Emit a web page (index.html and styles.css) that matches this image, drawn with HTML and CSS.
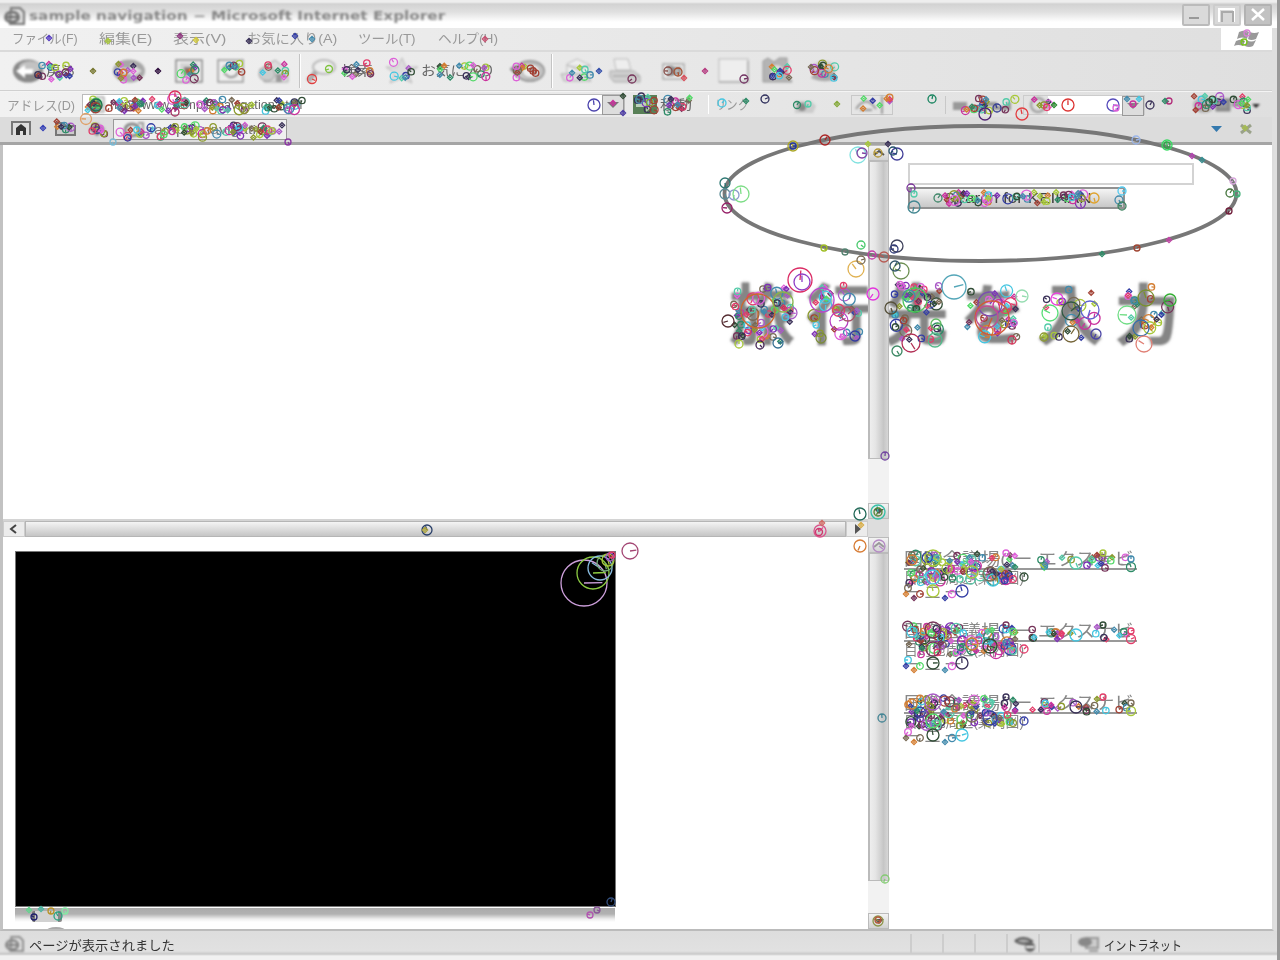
FILE: index.html
```html
<!DOCTYPE html>
<html lang="ja">
<head>
<meta charset="utf-8">
<title>sample navigation</title>
<link rel="stylesheet" href="styles.css">
</head>
<body>
<div class="window">
  <header class="titlebar">
    <svg class="soft" width="22" height="20" viewBox="0 0 22 20"><path d="M8 2h9l4 4v12H7z" fill="#ddd" stroke="#777" stroke-width="2"/><ellipse cx="9" cy="11" rx="6.500" ry="5" fill="none" stroke="#777" stroke-width="3"/><path d="M4 11h11" stroke="#666" stroke-width="2"/></svg>
    <span class="title-text fit" data-w="416">sample navigation − Microsoft Internet Explorer</span>
    <div class="win-buttons">
      <svg width="28" height="23" viewBox="0 0 28 23"><rect x="1" y="1" width="26" height="20" rx="1" fill="#dadada" stroke="#bbb" stroke-width="2"/><path d="M7 14h10" stroke="#999" stroke-width="2"/></svg>
      <svg width="28" height="23" viewBox="0 0 28 23"><rect x="1" y="1" width="26" height="20" rx="1" fill="#d8d8d8" stroke="#ccc" stroke-width="2"/><path d="M6 18V5h15v13" fill="none" stroke="#fff" stroke-width="2"/><path d="M9 18V8h11v10" fill="none" stroke="#aaa" stroke-width="2"/></svg>
      <svg width="28" height="23" viewBox="0 0 28 23"><rect x="1" y="1" width="26" height="20" rx="1" fill="#c2c2c2" stroke="#b2b2b2" stroke-width="2"/><path d="M8 5l12 11M20 5L8 16" stroke="#fff" stroke-width="2.500"/></svg>
    </div>
  </header>
  <nav class="menubar">
    <span class="m1"><span class="fit" data-w="66">ファイル(F)</span></span>
    <span class="m2"><span class="fit" data-w="53">編集(E)</span></span>
    <span class="m2"><span class="fit" data-w="53">表示(V)</span></span>
    <span class="m3"><span class="fit" data-w="90">お気に入り(A)</span></span>
    <span class="m4"><span class="fit" data-w="58">ツール(T)</span></span>
    <span><span class="fit" data-w="60">ヘルプ(H)</span></span>
    <div class="brand"><svg width="30" height="20" viewBox="0 0 30 20"><path d="M7 3q6-3 10 0l-2 7q-5-3-10 0zM18 3q4 2 9 0l-3 7q-5 2-8 0zM4 12q6-3 9 0l-2 5q-5-2-9 0zM15 11q4 3 9 0l-3 6q-4 2-8 0z" fill="#999"/></svg></div>
  </nav>
  <div class="toolbar">
    <svg class="soft" width="36" height="28" viewBox="0 0 36 28"><ellipse cx="18" cy="14" rx="15" ry="11.500" fill="#888"/><ellipse cx="20" cy="10" rx="11" ry="6" fill="#c2c2c2"/><path d="M6 14l9-6v4h8v5h-8v4z" fill="#fff"/></svg>
    <span class="label t1"><span class="fit" data-w="30">戻る</span></span>
    <svg class="fwd soft" width="42" height="28" viewBox="0 0 42 28"><ellipse cx="20" cy="14" rx="16" ry="11.500" fill="#a8a8a8"/><path d="M8 11h14V6l11 8-11 8v-5H8z" fill="#ddd"/></svg>
    <svg class="stop soft" width="42" height="28" viewBox="0 0 42 28"><rect x="8" y="3" width="26" height="22" fill="#eee" stroke="#888" stroke-width="1.500"/><rect x="12" y="6" width="18" height="16" fill="#d4d4d4"/><path d="M17 11h8v6h-8z" fill="#a75b43" stroke="#888" stroke-width="2"/></svg>
    <svg class="soft" width="42" height="28" viewBox="0 0 42 28"><rect x="8" y="3" width="25" height="22" fill="#eee" stroke="#999" stroke-width="1.500"/><path d="M13 14q0-7 9-6l5 4M28 14q-1 7-9 6l-5-4" fill="none" stroke="#999" stroke-width="2"/></svg>
    <svg class="soft" width="42" height="28" viewBox="0 0 42 28"><path d="M7 13L23 3l13 10v12H12v-9z" fill="#dcdcdc" stroke="#aaa"/><ellipse cx="15" cy="17" rx="8" ry="7" fill="#ccc" stroke="#999"/><path d="M24 17h6v8h-6z" fill="#999"/></svg>
    <i class="sep s1"></i>
    <svg class="soft" width="40" height="28" viewBox="0 0 40 28"><ellipse cx="23" cy="10" rx="11" ry="7" fill="#eee" stroke="#bbb" stroke-width="2"/><path d="M15 15L7 24" stroke="#aaa" stroke-width="5"/></svg>
    <span class="label t2"><span class="fit" data-w="32">検索</span></span>
    <svg class="soft" width="36" height="28" viewBox="0 0 36 28"><path d="M17 1l4 9h12l-10 6 4 10-10-5-12 5 4-10-8-6h11z" fill="#ddd" stroke="#bbb"/></svg>
    <span class="label t3"><span class="fit" data-w="74">お気に入り</span></span>
    <svg class="soft" width="44" height="28" viewBox="0 0 44 28"><ellipse cx="23" cy="14" rx="14" ry="10" fill="#ccc" stroke="#999" stroke-width="2"/><ellipse cx="24" cy="14" rx="9" ry="7" fill="#eee" stroke="#999"/><path d="M24 8v7l6 2M3 12l6-4 5 6-4 5z" fill="#888" stroke="#888"/></svg>
    <i class="sep"></i>
    <svg class="soft" width="48" height="28" viewBox="0 0 48 28"><path d="M14 7l10-5 13 6v9H14z" fill="#eee" stroke="#bbb"/><path d="M14 8l12 5 11-5M8 17h25l5 7H11z" fill="#ddd" stroke="#aaa"/></svg>
    <svg class="soft" width="46" height="28" viewBox="0 0 46 28"><path d="M13 2h14l3 11H15z" fill="#eee" stroke="#bbb"/><path d="M9 14h24l6 5v6H13l-4-5z" fill="#d0d0d0" stroke="#aaa"/><path d="M12 19h26" stroke="#999"/></svg>
    <svg class="soft" width="48" height="28" viewBox="0 0 48 28"><rect x="16" y="7" width="21" height="15" fill="#eee" stroke="#aaa" stroke-width="1.500"/><path d="M20 10h5v8h-5M27 11h6v6h-6z" fill="#bbb" stroke="#888" stroke-width="2"/></svg>
    <svg class="blank soft" width="44" height="28" viewBox="0 0 44 28"><rect x="7" y="2" width="29" height="23" fill="#eee" stroke="#bbb"/><path d="M7 25h29V4" fill="none" stroke="#999"/></svg>
    <svg class="soft" width="44" height="28" viewBox="0 0 44 28"><path d="M7 25V4l5-3 6 4 5-4h8v15l5 9z" fill="#b4b4b4" stroke="#999"/><circle cx="21" cy="14" r="6" fill="#ddd"/></svg>
    <svg class="soft" width="44" height="28" viewBox="0 0 44 28"><ellipse cx="24" cy="12" rx="12" ry="8" fill="#ccc"/><path d="M11 21l6-8 16 1 2 8q-10 5-24-1" fill="#aaa"/></svg>
  </div>
  <div class="address">
    <span class="addr-label"><span class="fit" data-w="68">アドレス(D)</span></span>
    <div class="field"><svg class="soft" width="20" height="18" viewBox="0 0 20 18"><path d="M8 1h9v15H6z" fill="#eee" stroke="#888"/><circle cx="9" cy="9" r="6" fill="#498465"/></svg><span class="url fit" data-w="192">http://www.sample-navigation.html</span><b class="drop"><svg width="14" height="10"><path d="M1 2l6 6 6-6" fill="#777"/></svg></b></div>
    <div class="go"><svg width="24" height="19"><rect width="24" height="19" fill="#588057"/><path d="M3 7h10V2l9 7-9 8v-5H3z" fill="#bcd0ba"/></svg><span class="label"><span class="fit" data-w="32">移動</span></span></div>
    <div class="links"><span class="label faint"><span class="fit" data-w="34">リンク</span></span></div>
    <svg class="camera soft" width="28" height="18"><path d="M4 5h16l5 5-3 7H4z" fill="#ccc"/><circle cx="11" cy="11" r="4" fill="#888"/></svg>
    <div class="mini"><svg class="soft" width="40" height="18"><path d="M4 13q10-15 20 0M8 14h12M30 0v18" fill="none" stroke="#999" stroke-width="2"/></svg></div>
    <div class="google"><svg class="soft" width="66" height="18"><path d="M3 12V8h10v4zM17 12h14V8h12v4h14V6" fill="none" stroke="#999" stroke-width="4"/></svg></div>
    <div class="search-box"><svg class="soft" width="24" height="18"><ellipse cx="14" cy="9" rx="7" ry="7" fill="#ddd" stroke="#999" stroke-width="2"/></svg><span></span><b class="drop"><svg width="14" height="10"><path d="M1 2l6 6 6-6" fill="#888"/></svg></b></div>
    <div class="options"><svg class="soft" width="72" height="18"><ellipse cx="13" cy="9" rx="11" ry="8" fill="#b4b4b4"/><path d="M26 4h12v10H26zM42 5h10M41 9h13" fill="#999" stroke="#888" stroke-width="3"/><path d="M61 8h8l-4 4z" fill="#222"/></svg></div>
  </div>
  <div class="tabs">
    <svg width="22" height="18" viewBox="0 0 22 18"><path d="M1 15V2h18v13" fill="#ddd" stroke="#777" stroke-width="2"/><path d="M5 15V8l5-4 5 4v7h-3v-4H9v4z" fill="#333"/></svg>
    <svg class="folder" width="24" height="18"><path d="M2 15V3h7l3 3h9v9z" fill="#ccc" stroke="#777" stroke-width="2"/></svg>
    <svg class="soft" width="20" height="18"><path d="M1 9l8-6 8 6-8 7z" fill="#777"/></svg>
    <div class="tab"><svg class="soft" width="26" height="18"><ellipse cx="12" cy="9" rx="7" ry="6" fill="none" stroke="#888" stroke-width="3"/><path d="M18 2h5v13h-8" fill="none" stroke="#999" stroke-width="2"/></svg><span class="fit" data-w="128">sample navigation</span></div>
    <svg class="tabx" width="44" height="14"><path d="M3 4h11l-5.500 6z" fill="#3479ae"/><path d="M33 3l10 8m0-8L33 11" stroke="#9aa28a" stroke-width="3"/></svg>
  </div>
  <main class="page">
    <section class="left">
      <div class="map"></div>
      <div class="hscroll"><b><svg width="12" height="12"><path d="M8 2L3 6l5 4" fill="none" stroke="#444" stroke-width="2"/></svg></b><i></i><b><svg width="12" height="12"><path d="M4 1l6 5-6 5z" fill="#555"/></svg></b></div>
      <div class="lower"><div class="movie"></div><div class="track"><i></i></div><div class="knob"></div></div>
    </section>
    <section class="vscroll">
      <b><svg width="12" height="8"><path d="M1 6l5-4 5 4" fill="none" stroke="#555" stroke-width="2"/></svg></b><i class="thumb a"></i><b class="down"><svg width="12" height="8"><path d="M1 2l5 5 5-5" fill="#555"/></svg></b>
      <span class="corner"></span>
      <b><svg width="12" height="8"><path d="M1 6l5-4 5 4" fill="none" stroke="#999" stroke-width="2"/></svg></b><i class="thumb b"></i><b class="down"><svg width="12" height="8"><path d="M1 2l5 5 5-5" fill="#555"/></svg></b>
    </section>
    <section class="right">
      <div class="form"><div class="input"></div><div class="button"><span class="fit" data-w="148">Search for KEIHAN</span></div></div>
      <ul class="results">
        <li><u><span class="fit" data-w="230">国際会議場()ー エクスナビ</span></u><p><span class="fit" data-w="120">目的地周辺(案内図)</span></p><small>一 二 一</small></li>
        <li><u><span class="fit" data-w="230">国際会議場()ー エクスナビ</span></u><p><span class="fit" data-w="120">目的地周辺(案内図)</span></p><small>一 二 一</small></li>
        <li><u><span class="fit" data-w="230">国際会議場()ー エクスナビ</span></u><p><span class="fit" data-w="120">目的地周辺(案内図)</span></p><small>一 二 一</small></li>
      </ul>
    </section>
    <div class="caption">旅行先を入力</div>
  </main>
  <footer class="status">
    <svg class="soft" width="22" height="18" viewBox="0 0 22 20"><path d="M8 2h9l4 4v12H7z" fill="#ddd" stroke="#888" stroke-width="2"/><ellipse cx="9" cy="11" rx="6.500" ry="5" fill="none" stroke="#888" stroke-width="3"/><path d="M4 11h11" stroke="#777" stroke-width="2"/></svg>
    <span class="msg fit" data-w="146">ページが表示されました</span>
    <div class="cells"><i></i><i></i><i></i><i><svg class="soft" width="24" height="17"><path d="M2 5q8-6 17 0-8 6-17 0" fill="#aaa" stroke="#555" stroke-width="2"/><circle cx="17" cy="11" r="5" fill="#666"/><path d="M13 11h8" stroke="#fff" stroke-width="2"/></svg></i><i></i><i class="zone"><svg class="soft" width="24" height="17"><path d="M9 2h12v10H9zM12 15h9" fill="#ccc" stroke="#999" stroke-width="2"/><ellipse cx="8" cy="6" rx="7" ry="4.500" fill="#888"/></svg><span class="fit" data-w="78">イントラネット</span></i></div>
  </footer>
</div>
<svg class="overlay" id="overlay" width="1280" height="960" viewBox="0 0 1280 960"><ellipse class="ring" cx="980.500" cy="193.500" rx="256" ry="67.500"/></svg>
<script src="script.js"></script>
</body>
</html>
```

FILE: styles.css
```css
* { box-sizing: border-box; }
body { margin: 0; width: 1280px; height: 960px; overflow: hidden; background: #eee; font-family: "Liberation Sans", "Noto Sans CJK JP", sans-serif; font-size: 13px; color: #555; }
i { font-style: normal; }
svg { display: block; flex: none; }
.soft { filter: blur(.8px); }
.fit { display: inline-block; white-space: nowrap; transform-origin: left center; }
.window { width: 1280px; height: 960px; display: flex; flex-direction: column; border-right: 3px solid #999; background: linear-gradient(90deg, #f1f1f1, #dfdfdf); }
.titlebar { height: 28px; display: flex; align-items: center; padding: 3px 5px 0 3px; background: linear-gradient(#eee 0, #eee 2px, #d2d2d2 4px, #e0e0e0 12px, #fff 22px, #fff); }
.title-text { margin-left: 4px; font: 700 12px "DejaVu Sans", sans-serif; color: #858585; filter: blur(.8px); }
.win-buttons { margin-left: auto; display: flex; gap: 3px; filter: blur(.5px); }
.menubar { height: 24px; display: flex; align-items: center; padding-left: 12px; color: #999; border-bottom: 2px solid #dadada; margin-right: 5px; filter: blur(.45px); }
.menubar > span { display: block; width: 80px; line-height: 20px; }
.menubar .m1 { width: 87px; }
.menubar .m2 { width: 74px; }
.menubar .m3 { width: 111px; }
.brand { margin-left: auto; width: 51px; height: 22px; background: #fff; display: flex; justify-content: center; align-items: center; }
.toolbar { height: 39px; display: flex; align-items: center; padding-left: 10px; border-bottom: 1px solid #d0d0d0; margin-right: 5px; }
.label { display: block; color: #666; filter: blur(.6px); line-height: 18px; }
.label.faint { color: #999; }
.t1 { width: 63px; }
.stop { margin-left: 17px; }
.sep { width: 2px; height: 34px; background: #c4c4c4; border-right: 1px solid #fff; }
.s1 { margin-left: 5px; }
.t2 { width: 44px; }
.t3 { width: 86px; }
.toolbar .blank { margin-left: 17px; }
.address { height: 26px; display: flex; align-items: center; padding-left: 7px; margin-right: 5px; border-top: 1px solid #f4f4f4; }
.addr-label { width: 75px; color: #999; filter: blur(.5px); }
.field { width: 543px; height: 21px; background: #fff; border: 1px solid #bbb; display: flex; align-items: center; padding-left: 4px; }
.url { margin-left: 3px; color: #666; filter: blur(.6px); }
.drop { width: 22px; height: 20px; margin-left: auto; background: #ddd; border: 1px solid #999; display: grid; place-items: center; }
.go { width: 84px; display: flex; gap: 3px; padding-left: 8px; align-items: center; border-right: 1px solid #fff; }
.links { width: 82px; padding-left: 6px; }
.mini { margin-left: 32px; width: 42px; border: 1px solid #c8c8c8; }
.google { margin-left: 52px; padding-left: 6px; border-left: 1px solid #c8c8c8; width: 78px; }
.search-box { width: 122px; display: flex; height: 20px; border: 1px solid #ccc; }
.search-box span { flex: 1; background: #fff; }
.options { margin-left: auto; margin-right: 9px; }
.tabs { height: 28px; display: flex; align-items: center; background: #dcdcdc; padding: 0 20px 2px 11px; margin-right: 5px; border-bottom: 3px solid #a5a5a5; }
.folder { margin-left: 21px; }
.tabs > .soft { margin-left: 10px; }
.tab { width: 174px; height: 21px; margin-left: 5px; align-self: flex-end; background: #f0f0f0; border: 1px solid #999; display: flex; align-items: center; padding-left: 6px; filter: blur(.5px); }
.tab .fit { font-size: 12px; color: #777; }
.tabx { margin-left: auto; }
.page { height: 786px; display: flex; position: relative; background: #fff; border-left: 3px solid #c2c2c2; border-right: 2px solid #ddd; margin-right: 3px; border-bottom: 2px solid #bbb; }
.left { width: 865px; display: flex; flex-direction: column; }
.map { height: 374px; }
.hscroll { height: 18px; display: flex; background: #ddd; border-top: 2px solid #d4d4d4; }
.hscroll b { width: 22px; display: grid; place-items: center; background: #ececec; border: 1px solid #ccc; }
.hscroll i { flex: 1; background: linear-gradient(#f4f4f4, #c5c5c5); border: 1px solid #b5b5b5; }
.lower { flex: 1; overflow: hidden; padding: 14px 0 0 12px; }
.movie { width: 601px; height: 356px; background: #000; border: 1px solid #777; }
.track { width: 600px; height: 14px; margin-top: 1px; padding: 3px 0 0 17px; background: linear-gradient(#aaa, #b2b2b2 6px, #eee 11px, #fff); }
.track i { display: block; width: 30px; height: 11px; background: #d2d2d2; border-left: 3px solid #777; border-right: 4px solid #888; border-radius: 2px; filter: blur(.6px); }
.knob { width: 20px; height: 8px; margin: 5px 0 0 31px; border-radius: 50%; border-top: 3px solid #aaa; filter: blur(.5px); }
.vscroll { position: relative; z-index: 2; width: 21px; display: flex; flex-direction: column; background: #f2f2f2; }
.vscroll b { height: 16px; flex: none; display: grid; place-items: center; background: linear-gradient(#f3f3f3, #d2d2d2); border: 1px solid #bbb; }
.thumb { background: linear-gradient(90deg, #eee, #e5e5e5 30%, #c6c6c6 75%, #d6d6d6); border: 1px solid #bbb; border-left: 2px solid #bbb; }
.thumb.a { height: 298px; }
.thumb.b { height: 328px; }
.down { margin-top: auto; }
.vscroll .thumb.a + .down { margin-top: 44px; }
.corner { height: 18px; background: #ddd; }
.right { flex: 1; padding: 18px 0 0 19px; }
.input { width: 286px; height: 22px; border: 2px solid #d3d3d3; }
.button { width: 217px; height: 22px; margin-top: 2px; display: flex; align-items: center; padding-left: 34px; background: linear-gradient(#f4f4f4, #c8c8c8); border: 2px solid #929292; color: #444; }
.button .fit { font-size: 14px; filter: blur(.6px); }
.results { list-style: none; margin: 342px 0 0; padding: 0; margin-left: -4px; color: #888; filter: blur(.5px); }
.results li { height: 72px; font-size: 17px; line-height: 17px; }
.results u { display: block; width: 233px; height: 19px; border-bottom: 2px solid #999; text-decoration: none; }
.results p { margin: 0; height: 15px; line-height: 15px; font-size: 15px; }
.results small { display: block; font-size: 16px; line-height: 15px; }
.caption { position: absolute; z-index: 1; left: 726px; top: 115px; font: 700 66px/100px "Noto Sans CJK JP", sans-serif; letter-spacing: 11px; white-space: nowrap; color: #858585; filter: blur(.8px); text-shadow: 0 0 3px #ccc; }
.status { flex: 1; display: flex; align-items: center; padding: 0 0 3px 3px; background: linear-gradient(#ddd, #e1e1e1 20px, #c9c9c9 23px, #f1f1f1 25px); color: #333; }
.msg { margin-left: 4px; filter: blur(.4px); }
.cells { margin-left: auto; display: flex; height: 20px; }
.cells i { width: 32px; border-left: 2px solid #cdcdcd; padding-left: 5px; display: flex; align-items: center; }
.cells .zone { width: 207px; gap: 3px; }
.cells .fit { filter: blur(.4px); }
.overlay { position: absolute; inset: 0; z-index: 5; }
.ring { fill: none; stroke: #777; stroke-width: 3.8px; filter: blur(.5px); }
```

FILE: script.js
```js
// Stretch labels to their column widths.
document.querySelectorAll('.fit').forEach(function (el) {
  var target = Number(el.dataset.w), natural = el.offsetWidth;
  el.style.transform = 'scaleX(' + target / natural + ')';
  el.style.marginRight = (target - natural) + 'px';
});

var overlay = document.getElementById('overlay');
var colors = ['#2e8b67', '#7d30b5', '#ca329d', '#353fa5', '#53d968', '#a24134', '#8c9a2e', '#438bad', '#76345a', '#d47e32', '#314d36', '#e23d6a', '#54cba9', '#aa59c7', '#3a3158', '#a8c83a', '#786a55', '#45c6e1', '#dd61d8'];
var seed = 37;
function rand() { seed = (seed * 16807) % 2147483647; return seed / 2147483647; }
function pick() { return colors[Math.floor(rand() * colors.length)]; }

// A keypoint is a circle with a radius line showing its orientation.
function point(x, y, r, color, angle) {
  color = color || pick();
  var a = angle === undefined ? rand() * 6.283 : angle;
  var p = document.createElementNS('http://www.w3.org/2000/svg', 'path');
  var d;
  if (r < 3) {
    d = 'M' + (x - 2.6) + ' ' + y + 'l2.6-2.6 2.6 2.6-2.6 2.6zM' + (x - 1) + ' ' + y + 'h2';
  } else {
    d = 'M' + (x - r) + ' ' + y + 'a' + r + ' ' + r + ' 0 1 0 ' + 2 * r + ' 0a' + r + ' ' + r + ' 0 1 0 ' + (-2 * r) + ' 0M' + x + ' ' + y + 'l' + Math.cos(a) * r * .8 + ' ' + Math.sin(a) * r * .8;
  }
  p.setAttribute('d', d);
  p.setAttribute('fill', 'none');
  p.setAttribute('stroke', color);
  p.setAttribute('stroke-width', '1.3');
  overlay.appendChild(p);
}
function cluster(x, y, w, h, n, large) {
  for (var i = 0; i < n; i++) {
    var q = rand();
    point(x + rand() * w, y + rand() * h, q < .42 ? 2 : q < .85 ? 3.2 : (large || 4));
  }
}

// Toolbars
[[34, 62, 20, 18, 7], [50, 64, 24, 14, 10], [114, 62, 28, 18, 13], [178, 63, 22, 17, 8], [220, 63, 22, 17, 8], [262, 62, 24, 17, 8], [343, 63, 32, 14, 10], [393, 62, 26, 18, 7], [427, 64, 68, 14, 17], [516, 65, 26, 13, 10], [567, 65, 24, 14, 7], [764, 64, 26, 16, 12], [810, 64, 28, 15, 13], [637, 96, 54, 16, 22], [856, 97, 34, 12, 8], [954, 98, 62, 13, 18], [1033, 98, 18, 11, 6], [1194, 96, 56, 15, 24], [56, 121, 17, 12, 7], [91, 123, 14, 11, 8]].forEach(function (b) { cluster.apply(null, b); });
cluster(86, 99, 216, 12, 88, 5);
cluster(120, 125, 162, 13, 67, 4);
[[49,38,2,'#543ac0'], [108,41,2], [180,36,2,'#903680'], [196,40,2,'#d0c83c'], [249,41,2], [295,36,2], [312,39,2], [485,39,2,'#c85272'], [93,71,2,'#777730'], [158,71,2,'#30103f'], [599,71,2,'#334eaa'], [668,71,4,'#88514c'], [684,78,2,'#d9505c'], [705,71,2,'#b53b80'], [312,79,4.5,'#e04040'], [329,69,3.5,'#80c33f'], [632,79,4], [678,72,4,'#a65032'], [744,79,4,'#703060'], [175,97,6,'#dc2e60',4.7], [175,112,4,'#a42b5c'], [86,119,5.5,'#dfa16a',3.2], [96,105,6,'#236f4f'], [594,105,6,'#4b43ac',4.6], [613,103,2], [623,96,2], [623,113,2,'#4c3ba6'], [722,103,4], [746,101,2], [765,99,4,'#30305c'], [797,105,3.5], [808,104,3], [837,104,2,'#85a93a'], [932,99,4,'#16835d'], [985,114,6,'#4f2472',4.7], [997,108,4,'#343d92'], [1022,114,6,'#e33d40',4.5], [1054,105,2,'#2a8b30'], [1068,105,6,'#dc3432',4.7], [1113,105,6,'#564bbb'], [1116,108,3], [1127,99,2], [1133,104,3], [1139,99,2], [1150,105,4], [1169,101,3,'#b22c79'], [1165,101,2], [1247,33,3,'#d580d2'], [1244,42,3,'#77c31b'], [43,128,2,'#343fb5'], [113,142,3,'#79b9d4'], [288,142,3,'#8a36a2'], [1245,128,2,'#a6bc51']].forEach(function (p) { point.apply(null, p); });

// Ellipse and search form
[[725,183,5,'#2c7772'],[725,194,5,'#5b8b95'],[734,195,5,'#8b9acd'],[741,194,8,'#7ddd86'],[727,208,5,'#972068'],[793,146,5,'#aaa625'],[793,146,3,'#263a99'],[825,140,5,'#ab2424'],[1136,140,4,'#99b5eb'],[1167,145,5,'#36db60'],[1167,145,3,'#36a34c'],[1192,156,2,'#b344b0'],[1202,160,2,'#388f91'],[1233,181,3,'#d6a7da'],[1230,193,4,'#42733a'],[1237,194,3,'#48b37d'],[1229,211,3,'#701f3b'],[1169,240,2,'#c342a6'],[1137,248,3,'#a04633'],[1102,254,2],[824,248,3,'#9fbd23'],[845,252,3,'#52806f'],[861,245,4,'#46c86a'],[897,246,6,'#40435d'],[894,249,4,'#323c77'],[872,255,4,'#c43da8'],[884,257,5,'#b65b54'],[856,269,8,'#e0b253'],[901,271,8,'#6c8f52'],[895,266,5,'#31566a'],[861,260,4],[858,155,8,'#82e2e0'],[862,153,5,'#8043a4'],[868,144,2],[878,153,4,'#b29635'],[888,144,2],[897,154,6,'#423f98'],[893,151,4,'#24516a'],[911,188,4,'#7b349a'],[914,194,3],[914,207,6,'#438791'],[1122,191,4,'#53caf0'],[1119,200,4],[1122,206,4,'#3b815e'],[938,198,4,'#41876a'],[1094,198,5,'#dfa22b']].forEach(function (p) { point.apply(null, p); });
cluster(945, 192, 141, 12, 52, 5);

// Caption characters
[[732,284,60,58,62],[812,284,50,55,30],[891,284,49,58,50],[967,284,52,55,32],[1044,289,54,50,21],[1126,284,46,56,24]].forEach(function (b) { cluster(b[0],b[1],b[2],b[3],b[4],6); });
[[800,280,12,'#db2b64',4.8],[802,282,8,'#8d3dc5',4.7],[822,300,12,'#bc45cd',4.6],[758,311,17,'#cc672e',1.6],[783,302,10,'#88b34a'],[839,321,9,'#b640c1'],[848,314,7,'#a85368'],[873,294,6,'#e334dc'],[915,300,12,'#4fc65b',5.3],[954,287,12,'#54a6b8',-.25],[891,308,6,'#56513b'],[911,343,9,'#b23056',1],[897,351,5,'#3a8762'],[990,304,12,'#7d4bb2'],[992,318,17,'#d15a35'],[987,317,11,'#c04f91'],[1022,296,6,'#95dcb0'],[1071,311,9,'#315943',-.7],[1071,334,8,'#76663a'],[1057,299,6,'#e944dc'],[1090,310,9,'#6064ce'],[1050,313,8,'#57df78'],[1127,315,9,'#71dd86'],[1141,328,8,'#346eaa'],[1146,298,8,'#7a9030'],[1144,344,8,'#e08076',3.7],[1170,300,6,'#34af34'],[1012,340,4,'#d13154'],[728,321,6,'#552d32'],[739,344,4],[760,345,4,'#422452'],[778,343,5,'#367092'],[821,338,5,'#7c8c3b'],[855,336,5,'#333ba0'],[936,324,5,'#60ba62'],[935,340,7,'#54bb8b'],[1044,337,4],[1096,334,5,'#4a44a5']].forEach(function (p) { point.apply(null,p); });

// Scroll areas and media panel
[[885,456,4,'#7246a0'],[860,514,6,'#226958',4.5],[878,512,7,'#35bfa7'],[878,512,4,'#4e812e'],[860,546,6,'#d77c35',2],[879,546,6,'#b48ac4'],[427,530,5,'#283e68'],[425,530,2,'#aaa13c'],[820,531,6,'#da548c'],[819,532,3.5,'#cf356c'],[822,523,2,'#d06a64'],[861,525,2,'#d8ae48'],[882,718,4,'#438494'],[885,879,4,'#83cb72'],[878,921,5,'#8c9448'],[878,920,3,'#b75a3d'],[630,551,8,'#a34673',-.15],[584,583,23,'#cc9fda',-.02],[593,573,16,'#8dcc43',-.04],[600,568,12,'#89bce0'],[605,563,8,'#74aa7c'],[608,560,6],[610,557,4],[612,555,3],[29,910,2,'#63d48e'],[41,909,2,'#4bb6a0'],[51,911,3,'#b99227'],[65,911,3,'#86e7a5'],[34,917,3,'#21206d'],[58,916,4,'#2aa380'],[611,902,4,'#334e7c'],[597,910,3,'#8b5899'],[590,915,3,'#b154b0']].forEach(function (p) { point.apply(null,p); });

// Result rows
[0,72,144].forEach(function (offset) {
  cluster(907,554 + offset,58,29,60,5);
  cluster(969,554 + offset,27,26,20,5);
  cluster(992,569 + offset,20,13,16,6);
  cluster(1003,554 + offset,14,13,5);
  cluster(1032,557 + offset,96,11,22,4);
  [[933,558,8],[912,560,5],[933,577,7],[933,591,6],[908,588,3.3],[920,594,3.3],[914,598,2],[906,594,2],[952,594,3.6],[945,598,2],[962,591,6],[972,572,6],[990,574,7],[1013,579,3.4],[1024,577,4],[1076,563,6],[1131,567,4.5],[1131,559,3],[1103,553,3],[1097,555,2],[1015,567,2],[992,558,2],[1006,553,3]].forEach(function (p) { point(p[0],p[1]+offset,p[2]); });
});
```
